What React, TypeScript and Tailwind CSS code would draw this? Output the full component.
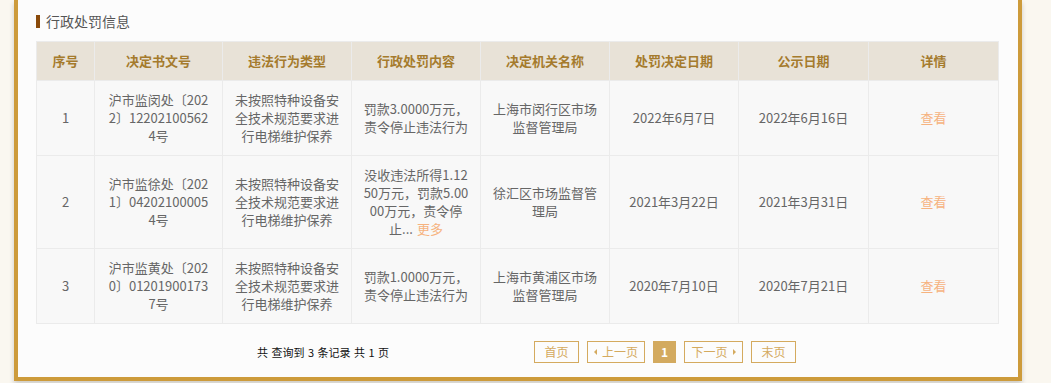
import React from 'react'

type Row = {
  no: string
  doc: string[]
  type: string[]
  content: string[]
  more?: boolean
  org: string[]
  date: string
  pubDate: string
}

const rows: Row[] = [
  {
    no: '1',
    doc: ['沪市监闵处〔202', '2〕12202100562', '4号'],
    type: ['未按照特种设备安', '全技术规范要求进', '行电梯维护保养'],
    content: ['罚款3.0000万元，', '责令停止违法行为'],
    org: ['上海市闵行区市场', '监督管理局'],
    date: '2022年6月7日',
    pubDate: '2022年6月16日',
  },
  {
    no: '2',
    doc: ['沪市监徐处〔202', '1〕04202100005', '4号'],
    type: ['未按照特种设备安', '全技术规范要求进', '行电梯维护保养'],
    content: ['没收违法所得1.12', '50万元，罚款5.00', '00万元，责令停', '止...'],
    more: true,
    org: ['徐汇区市场监督管', '理局'],
    date: '2021年3月22日',
    pubDate: '2021年3月31日',
  },
  {
    no: '3',
    doc: ['沪市监黄处〔202', '0〕01201900173', '7号'],
    type: ['未按照特种设备安', '全技术规范要求进', '行电梯维护保养'],
    content: ['罚款1.0000万元，', '责令停止违法行为'],
    org: ['上海市黄浦区市场', '监督管理局'],
    date: '2020年7月10日',
    pubDate: '2020年7月21日',
  },
]

const headers = ['序号', '决定书文号', '违法行为类型', '行政处罚内容', '决定机关名称', '处罚决定日期', '公示日期', '详情']
const widths = ['w-[58px]', 'w-[128px]', 'w-[129px]', 'w-[129px]', 'w-[129px]', 'w-[129px]', 'w-[130px]', 'w-[130px]']

const Lines: React.FC<{ lines: string[]; more?: boolean }> = ({ lines, more }) => (
  <>
    {lines.map((l, i) => (
      <div key={i} className="whitespace-nowrap">
        {l}
        {more && i === lines.length - 1 && <span className="ml-[4px] text-[#f6b37f]">更多</span>}
      </div>
    ))}
  </>
)

const td = 'border border-[#ebebeb] bg-[#f8f8f8] px-[6px] py-[10px] text-center align-middle'

const PageButton: React.FC<{ children: React.ReactNode; className?: string }> = ({ children, className }) => (
  <div
    className={`flex h-[22px] items-center justify-center border border-[#d4aa5e] text-[12px] text-[#d4aa5e] ${className ?? ''}`}
  >
    {children}
  </div>
)

const App: React.FC = () => {
  return (
    <div
      className="h-[383px] w-[1051px] overflow-hidden bg-[#faf7f0]"
      style={{ fontFamily: '"Noto Sans CJK SC", "Microsoft YaHei", sans-serif' }}
    >
      <div className="ml-[14px] w-[1008px] border-x-4 border-b-4 border-[#cd9b3b] bg-[#fcfcfc] px-[18px] pb-[14px] pt-[11px] shadow-[0_3px_5px_rgba(0,0,0,0.18)]">
        <div className="mb-[10px] flex h-[20px] items-center">
          <span className="mr-[6px] h-[13px] w-[4px] bg-[#8a4a0a]" />
          <span className="text-[14px] leading-[20px] text-[#555]">行政处罚信息</span>
        </div>

        <table className="w-[962px] table-fixed border-collapse text-[13px] leading-[18px] text-[#666]">
          <colgroup>
            {widths.map((w, i) => (
              <col key={i} className={w} />
            ))}
          </colgroup>
          <thead>
            <tr>
              {headers.map((h) => (
                <th
                  key={h}
                  className="h-[39px] border border-[#ebebeb] bg-[#e8e2d7] p-0 text-center text-[13px] font-bold text-[#a57b2d]"
                >
                  {h}
                </th>
              ))}
            </tr>
          </thead>
          <tbody>
            {rows.map((r) => (
              <tr key={r.no}>
                <td className={td}>{r.no}</td>
                <td className={td}>
                  <Lines lines={r.doc} />
                </td>
                <td className={td}>
                  <Lines lines={r.type} />
                </td>
                <td className={td}>
                  <Lines lines={r.content} more={r.more} />
                </td>
                <td className={td}>
                  <Lines lines={r.org} />
                </td>
                <td className={td}>{r.date}</td>
                <td className={td}>{r.pubDate}</td>
                <td className={td}>
                  <span className="text-[#f6b37f]">查看</span>
                </td>
              </tr>
            ))}
          </tbody>
        </table>

        <div className="mt-[17px] flex h-[22px] items-center">
          <div className="w-[498px] pl-[221px] text-[11px] [word-spacing:1px] text-[#111]">
            共 查询到 3 条记录 共 1 页
          </div>
          <div className="flex items-center gap-[8px]">
            <PageButton className="w-[45px]">首页</PageButton>
            <PageButton className="w-[58px]">
              <span className="mr-[5px] h-0 w-0 border-y-[3px] border-r-[3px] border-y-transparent border-r-[#d4aa5e]" />
              上一页
            </PageButton>
            <div className="flex h-[22px] w-[23px] items-center justify-center bg-[#d3aa5f] text-[12px] font-bold text-white">
              1
            </div>
            <PageButton className="w-[59px]">
              下一页
              <span className="ml-[5px] h-0 w-0 border-y-[3px] border-l-[3px] border-y-transparent border-l-[#d4aa5e]" />
            </PageButton>
            <PageButton className="w-[45px]">末页</PageButton>
          </div>
        </div>
      </div>
    </div>
  )
}

export default App
